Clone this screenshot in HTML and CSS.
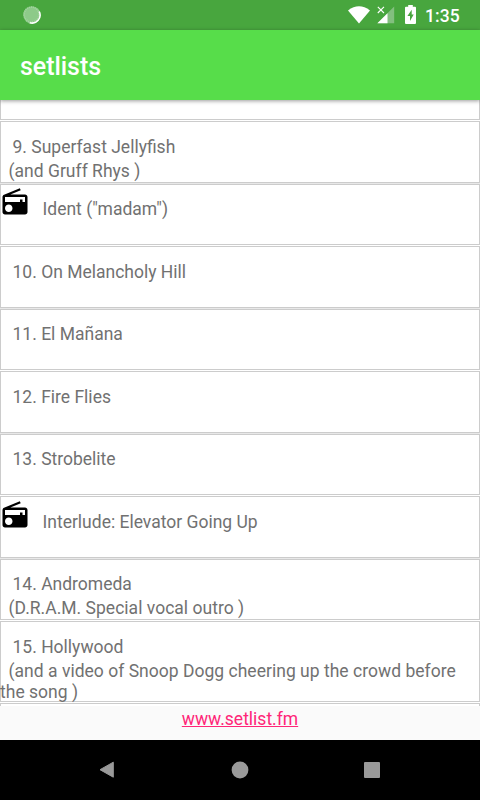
FILE: index.html
```html
<!DOCTYPE html>
<html lang="en">
<head>
<meta charset="utf-8">
<title>setlists</title>
<link rel="stylesheet" href="styles.css">
</head>
<body>
<div class="screen">
  <header class="status">
    <svg class="sync" width="18" height="18" viewBox="0 0 18 18"><circle cx="9" cy="9" r="8.7" fill="#8dca89"/><circle cx="8.5" cy="8.5" r="7.4" fill="none" stroke="#a5d5a1" stroke-width="1.6" stroke-dasharray="1 1"/><path d="M16.2 5.5A8 8 0 0 1 6.7 16.7" fill="none" stroke="#fff" stroke-width="1.5"/></svg>
    <svg class="wifi" width="22" height="18" viewBox="0 0 22 18"><path d="M0 4.4Q11-4 22 4.4L11 17.5Z" fill="#fff"/></svg>
    <svg class="signal" width="18" height="18" viewBox="0 0 18 18"><path d="M17.2 .5V17.3H.4Z" fill="#83bf7f"/><path d="M10.5 7.2V17.3H.4Z" fill="#fff"/><path d="M0 0H9V8H0Z" fill="#48a63e"/><path d="M.8 .8L7 7M7 .8L.8 7" stroke="#fff" stroke-width="1.1"/></svg>
    <svg class="battery" width="11" height="19" viewBox="0 0 11 19"><path d="M3.2 0H7.8V1.7H10Q11 1.7 11 2.7V18Q11 19 10 19H1Q0 19 0 18V2.7Q0 1.7 1 1.7H3.2Z" fill="#fff"/><path d="M6.7 4.8L2.4 11H5V16L8.7 9.4H6.7Z" fill="#48a63e"/></svg>
    <span class="clock">1:35</span>
  </header>
  <div class="toolbar"><h1>setlists</h1></div>
  <main class="list">
    <div class="row first"></div>
    <div class="row soft"><div class="song">9. Superfast Jellyfish</div><div class="info">(and Gruff Rhys )</div></div>
    <div class="row short"><svg class="radio" viewBox="0 0 24 24"><path d="M3.24 6.15C2.51 6.43 2 7.17 2 8v12c0 1.1.89 2 2 2h16c1.11 0 2-.9 2-2V8c0-1.11-.89-2-2-2H8.3l8.26-3.34L15.88 1 3.24 6.15zM7 20c-1.66 0-3-1.34-3-3s1.34-3 3-3 3 1.34 3 3-1.34 3-3 3zm13-8h-2v-2h-2v2H4V8h16v4z"/></svg><div class="song tape">Ident ("madam")</div></div>
    <div class="row soft"><div class="song">10. On Melancholy Hill</div></div>
    <div class="row short"><div class="song">11. El Mañana</div></div>
    <div class="row soft"><div class="song">12. Fire Flies</div></div>
    <div class="row short"><div class="song">13. Strobelite</div></div>
    <div class="row soft"><svg class="radio" viewBox="0 0 24 24"><path d="M3.24 6.15C2.51 6.43 2 7.17 2 8v12c0 1.1.89 2 2 2h16c1.11 0 2-.9 2-2V8c0-1.11-.89-2-2-2H8.3l8.26-3.34L15.88 1 3.24 6.15zM7 20c-1.66 0-3-1.34-3-3s1.34-3 3-3 3 1.34 3 3-1.34 3-3 3zm13-8h-2v-2h-2v2H4V8h16v4z"/></svg><div class="song tape">Interlude: Elevator Going Up</div></div>
    <div class="row short"><div class="song">14. Andromeda</div><div class="info">(D.R.A.M. Special vocal outro )</div></div>
    <div class="row tall"><div class="song">15. Hollywood</div><div class="info">(and a video of Snoop Dogg cheering up the crowd before the song )</div></div>
    <div class="row"></div>
  </main>
  <footer class="credit"><a href="#">www.setlist.fm</a></footer>
  <nav class="navbar">
    <svg width="16" height="18" viewBox="0 0 16 18"><path d="M14.3 1.2V16.2L1 8.7Z" fill="#999" stroke="#999" stroke-linejoin="round"/></svg>
    <svg width="18" height="18" viewBox="0 0 18 18"><circle cx="9" cy="9" r="8.4" fill="#999"/></svg>
    <svg width="16" height="16" viewBox="0 0 16 16"><rect width="16" height="16" rx="1" fill="#999"/></svg>
  </nav>
</div>
</body>
</html>
```
FILE: styles.css
```css
* { box-sizing: border-box; }
body { margin: 0; font: 17.5px/21px Roboto, sans-serif; color: #717171; }
.screen { width: 480px; height: 800px; display: flex; flex-direction: column; overflow: hidden; background: #fafafa; }
.status { height: 30px; flex: none; display: flex; align-items: flex-start; background: #48a63e; padding: 0 19px 0 23px; color: #fff; }
.sync { margin-top: 6px; }
.wifi { margin: 6px 0 0 307px; }
.signal { margin: 6px 0 0 7px; }
.battery { margin: 5px 0 0 10px; }
.clock { margin: 6px 0 0 9px; font-weight: 500; font-size: 17.5px; letter-spacing: .1px; }
.toolbar { height: 70px; flex: none; display: flex; align-items: center; padding: 0 20px; background: #57dd4a; box-shadow: 0 1px 4px rgba(0,0,0,.4); z-index: 1; position: relative; }
h1 { margin: 4px 0 0; font-size: 25px; line-height: 30px; font-weight: 500; letter-spacing: -.05px; color: #fff; }
.list { height: 606px; flex: none; overflow: hidden; background: #fff; }
.row { display: flow-root; height: 62px; margin-bottom: 1px; border: 1px solid #ccc; background: #fff; position: relative; }
.row.first { height: 20px; border-top: 0; }
.row.short { height: 61px; }
.row.soft { box-shadow: 0 1px #e8e8e8; }
.row.tall { height: 81px; }
.song { margin: 15px 0 0 11.5px; }
.short .song { margin-top: 14px; }
.tape { margin-left: 41.5px; }
.info { margin: 3px -1px 0; text-indent: 8.5px; letter-spacing: .02px; }
.tall .info { line-height: 20.5px; }
.radio { position: absolute; left: -1px; top: 3px; width: 30px; height: 30px; fill: #000; }
.short .radio { top: 2px; }
.credit { height: 34px; flex: none; padding-top: 3px; text-align: center; }
.credit a { color: #ff2678; text-decoration-thickness: 1px; text-underline-offset: 1px; }
.navbar { height: 60px; flex: none; display: flex; align-items: center; justify-content: space-between; padding: 0 100px 0 99px; background: #000; }
```
